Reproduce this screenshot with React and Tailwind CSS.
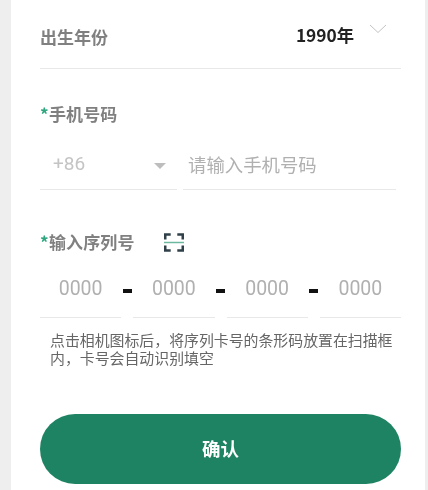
const font = { fontFamily: '"Noto Sans CJK SC", "Liberation Sans", sans-serif' };

function Chevron() {
  return (
    <svg width="18" height="10" viewBox="0 0 18 10" fill="none" className="block">
      <path d="M1 1l8 7.5L17 1" stroke="#c4c4c4" strokeWidth="1" />
    </svg>
  );
}

function ScanIcon() {
  return (
    <svg width="20" height="19" viewBox="0 0 20 19" fill="none" className="block">
      <path d="M1.2 6.5V1.5h5.5M13.3 1.5h5.5v5M1.2 12.5v5h5.5M13.3 17.5h5.5v-5" stroke="#2f4048" strokeWidth="2.6" />
      <path d="M0 9.5h20" stroke="#6fb8a0" strokeWidth="1.5" />
    </svg>
  );
}

function Req({ children }) {
  return (
    <div className="flex items-start text-[17px] leading-6 font-bold text-[#808080]">
      <span className="text-[#2fa67f] text-[17px] w-[9px]">*</span>
      <span className="tracking-[0.1px]">{children}</span>
    </div>
  );
}

function Serial() {
  return (
    <div className="flex-1 h-[57px] border-b border-[#e8e8e8] flex justify-center pt-[14px] text-[19.5px] leading-7 text-[#b0b0b0] font-['Roboto']">
      0000
    </div>
  );
}

function Dash() {
  return <div className="w-[9px] h-[4px] bg-[#111111] mx-[1.5px] mt-[28px] shrink-0" />;
}

export default function App() {
  return (
    <div className="w-[428px] h-[490px] overflow-hidden bg-[#eeeeee] pl-[11px] pr-[3px]" style={font}>
      <div className="h-full bg-white pl-[29px] pr-[24px] blur-[0.5px]">
        <div className="h-[69px] border-b border-[#e8e8e8] flex items-start justify-between">
          <span className="text-[17px] leading-6 font-bold text-[#808080] mt-[25px]">出生年份</span>
          <div className="flex items-start pr-[14px]">
            <span className="text-[17.3px] leading-6 font-bold text-[#222222] mt-[23px]">1990年</span>
            <div className="ml-[15px] mt-[24px]"><Chevron /></div>
          </div>
        </div>

        <div className="mt-[33px]"><Req>手机号码</Req></div>

        <div className="flex gap-[6px] mt-[15px] pr-[5px]">
          <div className="w-[137px] h-[49px] border-b border-[#e8e8e8] flex items-start pl-[13px] pt-[11px] text-[19px] leading-6 text-[#c4c4c4]">
            <span className="font-['Roboto']">+86</span>
            <span className="ml-auto mr-[11px] mt-[11px] w-0 h-0 border-x-[6.5px] border-x-transparent border-t-[6px] border-t-[#bdbdbd]" />
          </div>
          <div className="flex-1 h-[49px] border-b border-[#e8e8e8] pl-[5px] pt-[11px] text-[18.4px] leading-6 text-[#b0b0b0]">
            请输入手机号码
          </div>
        </div>

        <div className="flex items-center mt-[40px] h-6">
          <Req>输入序列号</Req>
          <div className="ml-[29px]"><ScanIcon /></div>
        </div>

        <div className="flex mt-[7px]">
          <Serial />
          <Dash />
          <Serial />
          <Dash />
          <Serial />
          <Dash />
          <Serial />
        </div>

        <p className="mt-[13px] ml-[10px] mr-[6px] text-[14.9px] leading-[18px] text-[#666666]">
          点击相机图标后，将序列卡号的条形码放置在扫描框内，卡号会自动识别填空
        </p>

        <button className="mt-[47px] w-full h-[70px] rounded-[35px] bg-[#1e8362] text-white text-[18.5px] font-bold flex items-center justify-center">
          确认
        </button>
      </div>
    </div>
  );
}
